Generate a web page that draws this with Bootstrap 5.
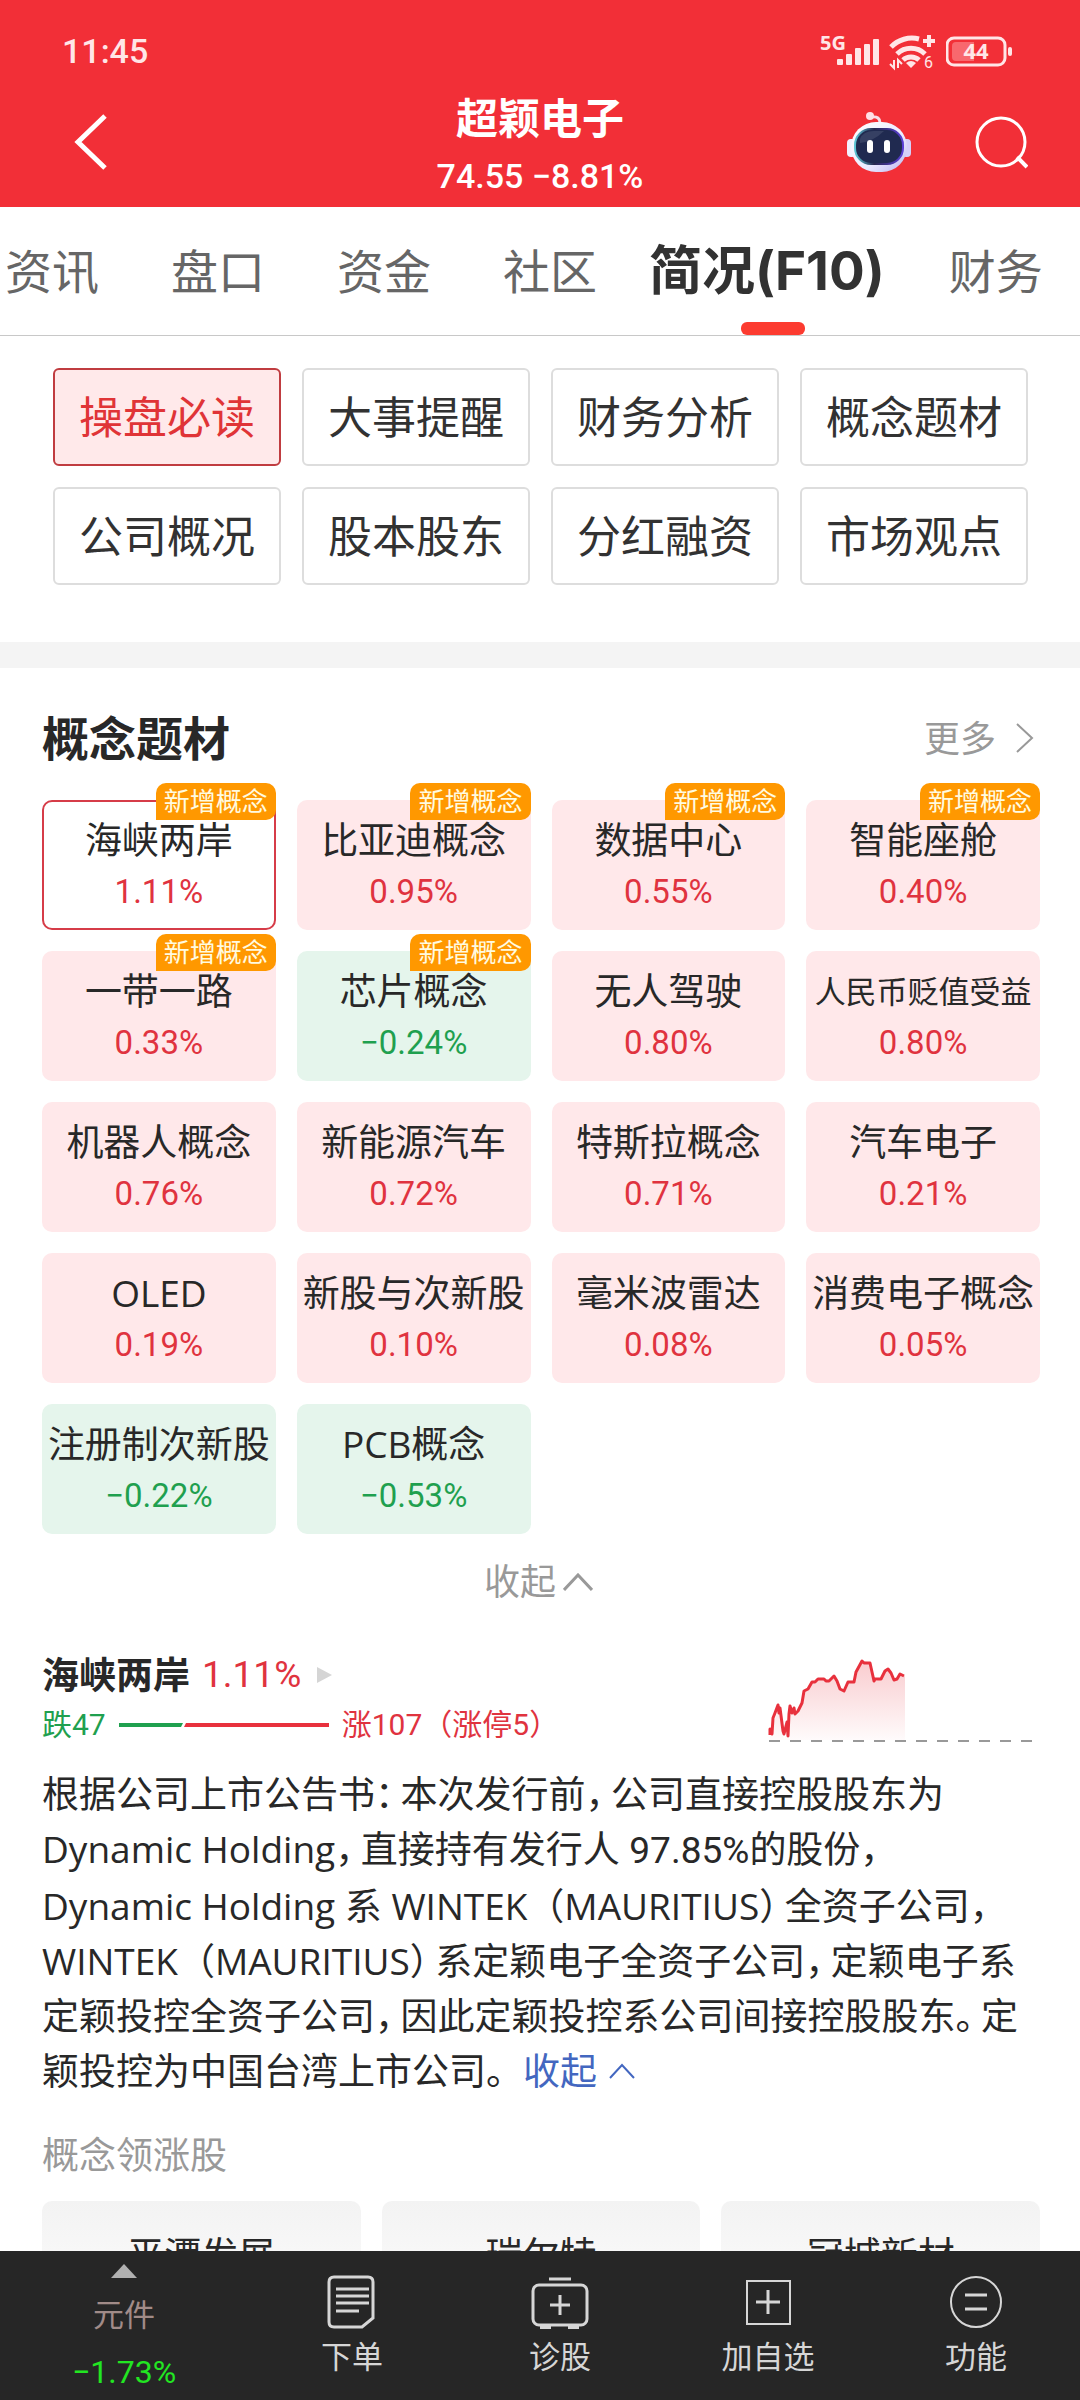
<!DOCTYPE html>
<html lang="zh-CN">
<head>
<meta charset="utf-8">
<meta name="viewport" content="width=device-width, initial-scale=1">
<title>超颖电子 简况(F10)</title>
<link href="https://cdn.jsdelivr.net/npm/bootstrap@5.3.0/dist/css/bootstrap.min.css" rel="stylesheet">
<style>
:root{--up:#e0333f;--down:#1fa04f;--ink:#282828;--muted:#999}
body{font-family:"Open Sans","Noto Sans CJK SC",sans-serif;font-size:37px;line-height:55px;color:var(--ink);background:#fff}
.num{font-family:Roboto,"Noto Sans CJK SC",sans-serif}
.up{color:var(--up)}.down{color:var(--down)}
svg{display:block;flex:none}
a{text-decoration:none;color:inherit}
.app-head{background:#f22f37;color:#fff}
.status{height:84px;padding:18px 67px 0 62px}
.status-icons{gap:9px}
.clock{font-size:34px;font-weight:500;color:#ffe6e7}
.titlebar{padding:0 52px 7px}
.side{flex:1 1 0}
.back{padding-left:22px}
.tools{gap:64px}
.stock{font-size:42px;line-height:68px;font-weight:700}
.quote{font-size:34px;line-height:48px;font-weight:500}
.tabs{border-bottom:1px solid #c8c8c8;height:129px}
.tabs a{font-size:47px;color:#666;padding:0 36px;white-space:nowrap;line-height:128px}
.tabs a:first-child{padding-left:5px}
.tabs a.on{font-family:Inter,"Noto Sans CJK SC",sans-serif;font-size:53px;font-weight:700;color:#323232;padding:0 28px 0 16px;position:relative}
.tabs a.on::after{content:"";position:absolute;left:50%;bottom:0;width:64px;height:13px;margin-left:-32px;border-radius:6px;background:#fc3b30}
.shortcuts{padding:32px 52px 57px 53px}
.grid-gap{--bs-gutter-x:21px;--bs-gutter-y:21px}
.btn-cut{border:2px solid #ddd;border-radius:6px;font-size:44px;line-height:94px;padding:0;color:#323232;white-space:nowrap}
.btn-cut.on{background:#ffe9ea;border-color:#c03c40;color:#e03437}
.band{height:26px;background:#f4f4f4}
.sect{padding:0 40px 0 42px}
.sect-head{height:132px;padding-top:8px}
.sect-head h2{font-size:47px;font-weight:700;margin:0}
.more{font-size:36px;color:var(--muted);gap:20px}
.tile{display:block;position:relative;width:100%;border:0;border-radius:10px;padding:14px 0 12px;background:#ffe8ea;color:var(--ink);line-height:52px;white-space:nowrap}
.tile.fall{background:#e5f5ec}
.tile.sel{background:#fff;box-shadow:inset 0 0 0 2px #d63c48}
.tile b{display:block;height:52px;font-weight:400}
.tile .num{display:block;height:52px;font-size:33px}
.tile .tight{font-size:31px}
.tag{position:absolute;top:-17px;right:0;font-size:26px;line-height:37px;padding:0 8px;background:#ff9800;color:#fffbe0;border-radius:10px 10px 10px 0}
.fold{font-size:36px;color:var(--muted);line-height:96px;padding:0 5px 0 0;border:0;background:none;gap:7px}
.detail{margin-top:20px;line-height:50px}
.detail h3{font-size:37px;line-height:50px;font-weight:700;margin:0}
.pct{font-size:37px;margin-left:12px}
.updown{font-size:30px;gap:13px}
.intro{margin:16px 0 32px}
.hw{font-feature-settings:"halt";margin-right:7px}
.intro a{color:#4367c0}
.intro svg{display:inline-block;margin:0 0 6px 12px;vertical-align:baseline}
.sub{color:var(--muted);line-height:50px;margin:0 0 21px;font-size:37px;font-weight:400}
.lead-card{border-radius:10px;background:linear-gradient(#f3f3f3,#fbfbfb 100px);padding:26px 0;text-align:center}
.scroller{min-height:0;scrollbar-width:none}
.scroller::-webkit-scrollbar{display:none}
.dock{background:#262626;height:149px;color:#d6d6d6;font-size:31px;line-height:44px}
.dock a{flex:208 1 0;padding-top:24px;gap:5px}
.dock .index{flex-grow:248;padding-top:13px;gap:14px}
.index span:nth-of-type(1){color:#a18b88}
.dock .index .num{color:#22e622;font-size:32px}
</style>
<script src="https://cdn.jsdelivr.net/npm/bootstrap@5.3.0/dist/js/bootstrap.bundle.min.js"></script>
</head>
<body class="d-flex flex-column vh-100 overflow-hidden">
<header class="app-head">
  <div class="status d-flex justify-content-between align-items-center">
    <span class="clock num">11:45</span>
    <div class="status-icons d-flex align-items-center">
      <svg width="60" height="40" viewBox="818 30 60 40" fill="#ffe6e7"><text x="818" y="49" font-family="Open Sans" font-size="20" font-weight="700">5G</text><rect x="835" y="58" width="6" height="6" rx="1"/><rect x="844" y="53" width="6" height="11" rx="1"/><rect x="853" y="47" width="6" height="17" rx="1"/><rect x="862" y="43" width="6" height="21" rx="1"/><rect x="871" y="38" width="6" height="26" rx="1"/></svg>
      <svg width="48" height="40" viewBox="888 30 48 40" fill="none" stroke="#ffe6e7" stroke-width="5"><path d="M890 46a29 29 0 0 1 28-8M896 53a20 20 0 0 1 28 0M902 59a12 12 0 0 1 16 0"/><path d="M905 62q5-4 10 0l-5 5z" fill="#ffe6e7" stroke="none"/><path d="M928 34v12M922 40h12" stroke-width="4"/><path d="M893 59v8l-4-4M897 67v-8l4 4" stroke-width="2"/><text x="923" y="67" font-family="Roboto" font-size="16" fill="#ffe6e7" stroke="none">6</text></svg>
      <svg width="67" height="40" viewBox="945 30 67 40"><rect x="946" y="37" width="58" height="27" rx="7" fill="none" stroke="#ffe6e7" stroke-width="3"/><path d="M955 41h18v19h-18q-4 0-4-4v-11q0-4 4-4" fill="#f8686e"/><rect x="1007" y="46" width="4" height="9" rx="2" fill="#ffe6e7"/><text x="975" y="58" text-anchor="middle" font-family="Open Sans" font-size="22" font-weight="700" fill="#ffe6e7">44</text></svg>
    </div>
  </div>
  <div class="titlebar d-flex align-items-center">
    <div class="side d-flex"><a href="#" aria-label="返回" class="back"><svg width="34" height="58" viewBox="74 113 34 58" fill="none" stroke="#fff" stroke-width="5"><path d="M105 116 78 142l27 26"/></svg></a></div>
    <div class="text-center">
      <div class="stock">超颖电子</div>
      <div class="quote num">74.55 −8.81%</div>
    </div>
    <div class="side tools d-flex justify-content-end align-items-center">
      <a href="#" aria-label="智能助手"><svg width="64" height="60" viewBox="0 0 64 60"><defs><linearGradient id="shell" x1="0" y1="0" x2="1" y2="1"><stop offset="0" stop-color="#fff"/><stop offset=".6" stop-color="#eceaff"/><stop offset="1" stop-color="#b9b4ee"/></linearGradient><linearGradient id="rim" x1="0" y1="0" x2="1" y2="0"><stop offset="0" stop-color="#5ec6d6"/><stop offset=".4" stop-color="#28284e"/><stop offset="1" stop-color="#5a3fd6"/></linearGradient></defs><path d="M25 5q8-1 8 6" fill="none" stroke="#f6dfea" stroke-width="3"/><circle cx="23" cy="4" r="4" fill="#ffdfe6"/><rect x="0" y="27" width="9" height="18" rx="4" fill="#f3f1ff"/><rect x="55" y="27" width="9" height="18" rx="4" fill="#d6d0fa"/><rect x="4" y="10" width="56" height="50" rx="25" fill="url(#shell)"/><rect x="8" y="17" width="48" height="35" rx="16" fill="#202a50" stroke="url(#rim)" stroke-width="2"/><path d="M13 27q3-8 14-8h10q-10 10-24 12z" fill="#465070" opacity=".6"/><rect x="20" y="28" width="6" height="13" rx="3" fill="#fff"/><rect x="37" y="28" width="6" height="13" rx="3" fill="#fff"/></svg></a>
      <a href="#" aria-label="搜索"><svg width="53" height="54" viewBox="975 116 53 54" fill="none" stroke="#fff" stroke-width="3"><circle cx="1001" cy="143" r="24"/><path d="m1017 158 10 10" stroke-width="4"/></svg></a>
    </div>
  </div>
</header>
<nav class="tabs d-flex overflow-hidden flex-shrink-0">
  <a href="#">资讯</a><a href="#">盘口</a><a href="#">资金</a><a href="#">社区</a><a href="#" class="on" aria-current="page">简况(F10)</a><a href="#">财务</a>
</nav>
<main class="scroller flex-grow-1 overflow-auto">
  <div class="shortcuts">
    <div class="row row-cols-4 grid-gap">
      <div><button class="btn btn-cut w-100 on">操盘必读</button></div>
      <div><button class="btn btn-cut w-100">大事提醒</button></div>
      <div><button class="btn btn-cut w-100">财务分析</button></div>
      <div><button class="btn btn-cut w-100">概念题材</button></div>
      <div><button class="btn btn-cut w-100">公司概况</button></div>
      <div><button class="btn btn-cut w-100">股本股东</button></div>
      <div><button class="btn btn-cut w-100">分红融资</button></div>
      <div><button class="btn btn-cut w-100">市场观点</button></div>
    </div>
  </div>
  <div class="band"></div>
  <section class="sect">
    <div class="sect-head d-flex justify-content-between align-items-center">
      <h2>概念题材</h2>
      <a href="#" class="more d-flex align-items-center">更多<svg width="24" height="30" viewBox="0 0 24 30" fill="none" stroke="#999" stroke-width="2"><path d="m1 1 15 14L1 29"/></svg></a>
    </div>
    <div class="row row-cols-4 grid-gap">
      <div><button class="tile sel"><b>海峡两岸</b><span class="num up">1.11%</span><span class="tag">新增概念</span></button></div>
      <div><button class="tile"><b>比亚迪概念</b><span class="num up">0.95%</span><span class="tag">新增概念</span></button></div>
      <div><button class="tile"><b>数据中心</b><span class="num up">0.55%</span><span class="tag">新增概念</span></button></div>
      <div><button class="tile"><b>智能座舱</b><span class="num up">0.40%</span><span class="tag">新增概念</span></button></div>
      <div><button class="tile"><b>一带一路</b><span class="num up">0.33%</span><span class="tag">新增概念</span></button></div>
      <div><button class="tile fall"><b>芯片概念</b><span class="num down">−0.24%</span><span class="tag">新增概念</span></button></div>
      <div><button class="tile"><b>无人驾驶</b><span class="num up">0.80%</span></button></div>
      <div><button class="tile"><b class="tight">人民币贬值受益</b><span class="num up">0.80%</span></button></div>
      <div><button class="tile"><b>机器人概念</b><span class="num up">0.76%</span></button></div>
      <div><button class="tile"><b>新能源汽车</b><span class="num up">0.72%</span></button></div>
      <div><button class="tile"><b>特斯拉概念</b><span class="num up">0.71%</span></button></div>
      <div><button class="tile"><b>汽车电子</b><span class="num up">0.21%</span></button></div>
      <div><button class="tile"><b>OLED</b><span class="num up">0.19%</span></button></div>
      <div><button class="tile"><b>新股与次新股</b><span class="num up">0.10%</span></button></div>
      <div><button class="tile"><b>毫米波雷达</b><span class="num up">0.08%</span></button></div>
      <div><button class="tile"><b>消费电子概念</b><span class="num up">0.05%</span></button></div>
      <div><button class="tile fall"><b>注册制次新股</b><span class="num down">−0.22%</span></button></div>
      <div><button class="tile fall"><b>PCB概念</b><span class="num down">−0.53%</span></button></div>
    </div>
    <button class="fold d-flex align-items-center mx-auto">收起<svg width="30" height="18" viewBox="0 0 30 18" fill="none" stroke="#999" stroke-width="3"><path d="M1 17 15 2l14 15"/></svg></button>
    <div class="detail d-flex justify-content-between align-items-end">
      <div>
        <div class="d-flex align-items-center">
          <h3>海峡两岸</h3><span class="num up pct">1.11%</span>
          <svg class="ms-3" width="15" height="16" viewBox="0 0 15 16" fill="#d5d5d5"><path d="M0 0l15 8L0 16z"/></svg>
        </div>
        <div class="updown num d-flex align-items-center">
          <span class="down">跌47</span>
          <svg width="210" height="4" viewBox="0 0 210 4"><path d="M0 0h64l-2 4H0z" fill="#1fa04f"/><path d="M67 0h143v4H65z" fill="#e8313d"/></svg>
          <span class="up">涨107（涨停5<span class="hw">）</span></span>
        </div>
      </div>
      <svg class="me-2" width="264" height="95" viewBox="769 1655 264 95"><defs><linearGradient id="fade" x1="0" y1="0" x2="0" y2="1"><stop offset="0" stop-color="#e8313d" stop-opacity=".25"/><stop offset="1" stop-color="#e8313d" stop-opacity=".02"/></linearGradient></defs>
      <path d="M771 1740v-5l3-11 5-13 2 3 4 26 5-12 2-16 5 2 3-3 4-8 2-12 4-2 4-7 6-3h6l5 2 5-5 3 5 3 8 4 2 4-9h6l2-10 6-11 8 2 4 18 7-2 4-8 3-2 3 4 3 7 3-1 3-5 4 2V1740z" fill="url(#fade)"/>
      <path d="M771 1735v-6l2 5 1-16 2-5 3-8 1 8 1-5 3 23 1 3 3-12 1 14 1-22 1-8 2 7 2-5 1 6 3-3 4-8 2-12 4-2 4-7h3l3-3h6l2 2h3l5-5 3 5 3 8 4 2 4-9h6l2-10 6-11 2 2h6l4 18 1-2h6l4-8 3-2 3 4 3 7 3-1 3-5 4 2" fill="none" stroke="#e8313d" stroke-width="3" stroke-linejoin="round"/>
      <path d="M770 1741h263" stroke="#999" stroke-width="2" stroke-dasharray="11 10"/></svg>
    </div>
    <p class="intro">根据公司上市公告书<span class="hw">：</span>本次发行前<span class="hw">，</span>公司直接控股股东为<br>Dynamic Holding<span class="hw">，</span>直接持有发行人 <span class="num">97.85%</span>的股份，<br>Dynamic Holding 系 WINTEK（MAURITIUS<span class="hw">）</span>全资子公司，<br>WINTEK（MAURITIUS<span class="hw">）</span>系定颖电子全资子公司<span class="hw">，</span>定颖电子系定颖投控全资子公司<span class="hw">，</span>因此定颖投控系公司间接控股股东<span class="hw">。</span>定颖投控为中国台湾上市公司。<a href="#">收起<svg width="26" height="16" viewBox="0 0 26 16" fill="none" stroke="#4367c0" stroke-width="2"><path d="M1 15 13 2l12 13"/></svg></a></p>
    <h4 class="sub">概念领涨股</h4>
    <div class="row row-cols-3 grid-gap">
      <div><div class="lead-card">平潭发展</div></div>
      <div><div class="lead-card">瑞尔特</div></div>
      <div><div class="lead-card">冠城新材</div></div>
    </div>
  </section>
</main>
<nav class="dock d-flex flex-shrink-0">
  <a href="#" class="index d-flex flex-column align-items-center"><svg width="26" height="14" viewBox="0 0 26 14" fill="#b0b0b0"><path d="M13 0l13 14H0z"/></svg><span>元件</span><span class="num">−1.73%</span></a>
  <a href="#" class="d-flex flex-column align-items-center"><svg width="54" height="54" viewBox="0 0 54 54" fill="none" stroke="#d6d6d6" stroke-width="3"><path d="M9 2h34q5 0 5 5v36L37 52H9q-5 0-5-5V7q0-5 5-5z"/><path d="M11 14h33M11 21h33M11 28h33M11 36h23"/></svg><span>下单</span></a>
  <a href="#" class="d-flex flex-column align-items-center"><svg width="58" height="54" viewBox="0 0 58 54" fill="none" stroke="#d6d6d6" stroke-width="3"><path d="M18 4h22"/><rect x="2" y="10" width="54" height="40" rx="6"/><path d="M29 20v20M19 30h20"/><path d="M9 52h11M37 52h11" stroke-width="4"/></svg><span>诊股</span></a>
  <a href="#" class="d-flex flex-column align-items-center"><svg width="54" height="54" viewBox="0 0 54 54" fill="none" stroke="#d6d6d6" stroke-width="2"><rect x="6" y="6" width="43" height="43"/><path d="M27 15v24M15 27h24" stroke-width="3"/></svg><span>加自选</span></a>
  <a href="#" class="d-flex flex-column align-items-center"><svg width="54" height="54" viewBox="0 0 54 54" fill="none" stroke="#d6d6d6" stroke-width="2"><circle cx="27" cy="27" r="25"/><path d="M16 20h22M16 34h22" stroke-width="3"/></svg><span>功能</span></a>
</nav>
</body>
</html>
